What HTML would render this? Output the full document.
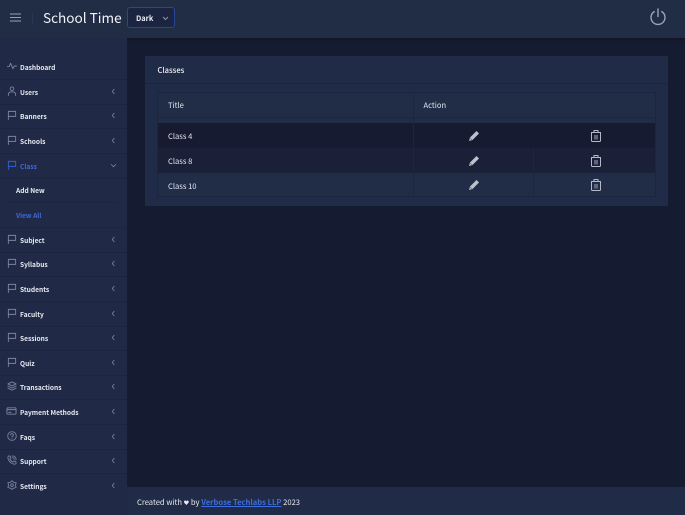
<!DOCTYPE html>
<html><head><meta charset="utf-8"><style>
*{box-sizing:border-box}
html,body{margin:0;padding:0}
body{width:685px;height:515px;overflow:hidden;background:#151b30;position:relative;font-family:"Noto Sans CJK JP","Liberation Sans",sans-serif;color:#e4e8f0}
.a{position:absolute}
#hd{left:0;top:0;width:685px;height:38px;background:#212c45;box-shadow:0 1px 3px rgba(0,0,0,.3)}
#sb{left:0;top:38px;width:127px;height:477px;background:#202a46}
.it{position:absolute;left:0;width:127px;height:25px;border-bottom:1px solid #1b2540}
.it b{position:absolute;left:20px;top:5px;font-size:6.6px;line-height:14px;font-weight:700;color:#e6e9f0;white-space:nowrap}
.it svg.i{position:absolute;left:6.5px;top:6px;width:10px;height:10px;fill:none;stroke:#7b859b;stroke-width:1;stroke-linecap:round;stroke-linejoin:round}
.it svg.c{position:absolute;left:111px;top:8px;width:5px;height:7px;fill:none;stroke:#7b859b;stroke-width:1}
.t{white-space:nowrap}
.line{position:absolute;background:#1c2640}
.s{font-size:7.6px;line-height:14px;color:#e2e6ee}
</style></head><body>
<div class="a" id="hd">
<svg class="a" style="left:10px;top:13px" width="11" height="9" fill="none" stroke="#98a1b3" stroke-width="1.1"><path d="M0 1H11M0 4.5H11M0 8H11"/></svg>
<div class="line" style="left:32px;top:13px;width:1px;height:11px;background:#2a3550"></div>
<div class="a t" style="left:43px;top:5px;font-size:13.6px;line-height:24px;color:#f0f3f8">School Time</div>
<div class="a" style="left:127px;top:7px;width:48px;height:21px;background:#1b2440;border:1px solid #2a4596;border-radius:3px"></div>
<div class="a t" style="left:136px;top:12px;font-size:7.4px;line-height:14px;font-weight:700;color:#e8ebf2">Dark</div>
<svg class="a" style="left:162px;top:16px" width="7" height="5" fill="none" stroke="#8e97aa"><path d="M1 1L3.5 3.5L6 1"/></svg>
<svg class="a" style="left:649px;top:8px" width="18" height="18" fill="none" stroke="#9ba4b7" stroke-width="1.4" stroke-linecap="round"><path d="M5.2 3.600A7 7 0 1 0 12.8 3.600M9 1V8.5"/></svg>
</div>
<div class="a" id="sb"></div>
<div class="it" style="top:55px"><svg class="i" viewBox="0 0 11 11"><path d="M0.5 6H2.5L4 2.5L6.5 8.5L8 5.5H10.5"/></svg><b>Dashboard</b></div>
<div class="it" style="top:80px"><svg class="i" viewBox="0 0 11 11"><circle cx="5.5" cy="3" r="2"/><path d="M1.5 10.5V9A3 3 0 0 1 4.5 6.5H6.5A3 3 0 0 1 9.5 9V10.5"/></svg><b>Users</b><svg class="c" viewBox="0 0 6 8"><path d="M4 1L1.5 4L4 7"/></svg></div>
<div class="it" style="top:104px"><svg class="i" viewBox="0 0 11 11"><path d="M1.5 10.5V1.5H9.5V7H1.5"/></svg><b>Banners</b><svg class="c" viewBox="0 0 6 8"><path d="M4 1L1.5 4L4 7"/></svg></div>
<div class="it" style="top:129px"><svg class="i" viewBox="0 0 11 11"><path d="M1.5 10.5V1.5H9.5V7H1.5"/></svg><b>Schools</b><svg class="c" viewBox="0 0 6 8"><path d="M4 1L1.5 4L4 7"/></svg></div>
<div class="it" style="top:154px"><svg class="i" viewBox="0 0 11 11" style="stroke:#2f5fd8"><path d="M1.5 10.5V1.5H9.5V7H1.5"/></svg><b style="color:#3f68d8">Class</b><svg class="c" viewBox="0 0 8 6" style="left:110px;top:9px;width:7px;height:5px"><path d="M1 1.5L4 4.5L7 1.5"/></svg></div>
<div class="a t" style="left:16px;top:183px;font-size:6.6px;line-height:14px;font-weight:700;color:#e6e9f0">Add New</div>
<div class="line" style="left:8px;top:178px;width:109px;height:1px"></div>
<div class="line" style="left:8px;top:202px;width:109px;height:1px"></div>
<div class="a t" style="left:16px;top:208px;font-size:6.6px;line-height:14px;font-weight:700;color:#3f68d8">View All</div>
<div class="line" style="left:0;top:227px;width:127px;height:1px"></div>
<div class="it" style="top:228px"><svg class="i" viewBox="0 0 11 11"><path d="M1.5 10.5V1.5H9.5V7H1.5"/></svg><b>Subject</b><svg class="c" viewBox="0 0 6 8"><path d="M4 1L1.5 4L4 7"/></svg></div>
<div class="it" style="top:252px"><svg class="i" viewBox="0 0 11 11"><path d="M1.5 10.5V1.5H9.5V7H1.5"/></svg><b>Syllabus</b><svg class="c" viewBox="0 0 6 8"><path d="M4 1L1.5 4L4 7"/></svg></div>
<div class="it" style="top:277px"><svg class="i" viewBox="0 0 11 11"><path d="M1.5 10.5V1.5H9.5V7H1.5"/></svg><b>Students</b><svg class="c" viewBox="0 0 6 8"><path d="M4 1L1.5 4L4 7"/></svg></div>
<div class="it" style="top:302px"><svg class="i" viewBox="0 0 11 11"><path d="M1.5 10.5V1.5H9.5V7H1.5"/></svg><b>Faculty</b><svg class="c" viewBox="0 0 6 8"><path d="M4 1L1.5 4L4 7"/></svg></div>
<div class="it" style="top:326px"><svg class="i" viewBox="0 0 11 11"><path d="M1.5 10.5V1.5H9.5V7H1.5"/></svg><b>Sessions</b><svg class="c" viewBox="0 0 6 8"><path d="M4 1L1.5 4L4 7"/></svg></div>
<div class="it" style="top:351px"><svg class="i" viewBox="0 0 11 11"><path d="M1.5 10.5V1.5H9.5V7H1.5"/></svg><b>Quiz</b><svg class="c" viewBox="0 0 6 8"><path d="M4 1L1.5 4L4 7"/></svg></div>
<div class="it" style="top:375px"><svg class="i" viewBox="0 0 11 11"><path d="M5.5 1L10 3.2L5.5 5.4L1 3.2ZM1 5.5L5.5 7.7L10 5.5M1 7.8L5.5 10L10 7.8"/></svg><b>Transactions</b><svg class="c" viewBox="0 0 6 8"><path d="M4 1L1.5 4L4 7"/></svg></div>
<div class="it" style="top:400px"><svg class="i" viewBox="0 0 11 11" style="left:6px;width:11px"><rect x="0.5" y="2" width="10" height="7" rx="1"/><path d="M0.5 4H10.5M2.5 7H5"/></svg><b>Payment Methods</b><svg class="c" viewBox="0 0 6 8"><path d="M4 1L1.5 4L4 7"/></svg></div>
<div class="it" style="top:425px"><svg class="i" viewBox="0 0 11 11"><circle cx="5.5" cy="5.5" r="4.7"/><path d="M4 4.3A1.5 1.5 0 1 1 5.5 6V6.8M5.5 8.3V8.4"/></svg><b>Faqs</b><svg class="c" viewBox="0 0 6 8"><path d="M4 1L1.5 4L4 7"/></svg></div>
<div class="it" style="top:449px"><svg class="i" viewBox="0 0 11 11"><path d="M2 1L3.8 1.3L4.3 3.5L3.2 4.3A6 6 0 0 0 6.5 7.7L7.5 6.6L9.7 7.2L10 9.2C9.5 10 8.5 10.3 7.5 10A9 9 0 0 1 1 3.5C0.8 2.5 1.2 1.5 2 1ZM6 1A4 4 0 0 1 10 5M6 3A2 2 0 0 1 8 5"/></svg><b>Support</b><svg class="c" viewBox="0 0 6 8"><path d="M4 1L1.5 4L4 7"/></svg></div>
<div class="it" style="top:474px;border:0"><svg class="i" viewBox="0 0 11 11"><path d="M5.5 0.8L7.3 2.5L10 3L9.3 5.8L10 8.2L7.3 9L5.5 10.3L3.7 9L1 8.2L1.7 5.8L1 3L3.7 2.5Z"/><circle cx="5.5" cy="5.7" r="1.5"/></svg><b>Settings</b><svg class="c" viewBox="0 0 6 8"><path d="M4 1L1.5 4L4 7"/></svg></div>

<div class="a" style="left:145px;top:56px;width:523px;height:150px;background:#202b47"></div>
<div class="line" style="left:145px;top:83px;width:523px;height:1px"></div>
<div class="a t" style="left:157.5px;top:64px;font-size:7.6px;line-height:14px;font-weight:500;color:#eceff5">Classes</div>

<div class="a" style="left:157px;top:92px;width:499px;height:105px;background:#212c47;border:1px solid #1c2640"></div>
<div class="line" style="left:157px;top:117px;width:499px;height:1px"></div>
<div class="a" style="left:158px;top:123px;width:497px;height:25px;background:#161b31"></div>
<div class="a" style="left:158px;top:148px;width:497px;height:25px;background:#1a2038"></div>
<div class="line" style="left:413px;top:92px;width:1px;height:105px"></div>
<div class="line" style="left:533px;top:148px;width:1px;height:49px"></div>
<div class="a t s" style="left:168px;top:99px">Title</div>
<div class="a t s" style="left:423.5px;top:99px">Action</div>
<div class="a t s" style="left:168px;top:130px">Class 4</div>
<div class="a t s" style="left:168px;top:155px">Class 8</div>
<div class="a t s" style="left:168px;top:180px">Class 10</div>

<svg class="a" style="left:468px;top:130px" width="12" height="12"><path d="M1 11L2 7.5L8.5 1L11 3.5L4.5 10Z" fill="#bcc2cd"/><path d="M2 8L4 10" stroke="#6a7285" stroke-width=".7"/></svg>
<svg class="a" style="left:468px;top:155px" width="12" height="12"><path d="M1 11L2 7.5L8.5 1L11 3.5L4.5 10Z" fill="#bcc2cd"/><path d="M2 8L4 10" stroke="#6a7285" stroke-width=".7"/></svg>
<svg class="a" style="left:468px;top:179px" width="12" height="12"><path d="M1 11L2 7.5L8.5 1L11 3.5L4.5 10Z" fill="#bcc2cd"/><path d="M2 8L4 10" stroke="#6a7285" stroke-width=".7"/></svg>

<svg class="a" style="left:591px;top:130px" width="10" height="12" fill="none" stroke="#b3b9c6"><path d="M0.5 2.5H9.5V10.5A1 1 0 0 1 8.5 11.5H1.5A1 1 0 0 1 0.5 10.5ZM3 2.5V0.5H7V2.5"/><rect x="3" y="5" width="4" height="4.5" fill="#5d6580" stroke="none"/></svg>
<svg class="a" style="left:591px;top:155px" width="10" height="12" fill="none" stroke="#b3b9c6"><path d="M0.5 2.5H9.5V10.5A1 1 0 0 1 8.5 11.5H1.5A1 1 0 0 1 0.5 10.5ZM3 2.5V0.5H7V2.5"/><rect x="3" y="5" width="4" height="4.5" fill="#5d6580" stroke="none"/></svg>
<svg class="a" style="left:591px;top:179px" width="10" height="12" fill="none" stroke="#b3b9c6"><path d="M0.5 2.5H9.5V10.5A1 1 0 0 1 8.5 11.5H1.5A1 1 0 0 1 0.5 10.5ZM3 2.5V0.5H7V2.5"/><rect x="3" y="5" width="4" height="4.5" fill="#5d6580" stroke="none"/></svg>

<div class="a" style="left:127px;top:487px;width:558px;height:28px;background:#202b47"></div>
<div class="a t" style="left:137px;top:496px;font-size:7.6px;line-height:14px;color:#e6e9f0">Created with <span style="font-size:5.5px">♥</span> by <span style="color:#3d6ee0;font-weight:700;text-decoration:underline">Verbose Techlabs LLP</span> 2023</div>
</body></html>
